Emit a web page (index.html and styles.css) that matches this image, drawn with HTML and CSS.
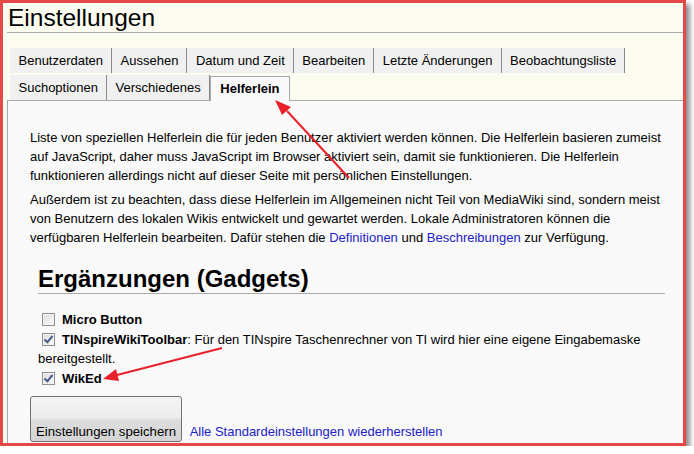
FILE: index.html
```html
<!DOCTYPE html>
<html lang="de">
<head>
    <meta charset="UTF-8">
    <title>Einstellungen</title>
    <link rel="stylesheet" href="styles.css">
</head>
<body>
    <div class="frame">
        <h1 class="title">Einstellungen</h1>

        <ul class="tabs">
            <li>Benutzerdaten</li>
            <li>Aussehen</li>
            <li>Datum und Zeit</li>
            <li>Bearbeiten</li>
            <li>Letzte Änderungen</li>
            <li>Beobachtungsliste</li>
            <li>Suchoptionen</li>
            <li>Verschiedenes</li>
            <li class="active">Helferlein</li>
        </ul>

        <div class="panel">
            <p>Liste von speziellen Helferlein die für jeden Benutzer aktiviert werden können. Die Helferlein basieren zumeist auf JavaScript, daher muss JavaScript im Browser aktiviert sein, damit sie funktionieren. Die Helferlein funktionieren allerdings nicht auf dieser Seite mit persönlichen Einstellungen.</p>
            <p>Außerdem ist zu beachten, dass diese Helferlein im Allgemeinen nicht Teil von MediaWiki sind, sondern meist von Benutzern des lokalen Wikis entwickelt und gewartet werden. Lokale Administratoren können die verfügbaren Helferlein bearbeiten. Dafür stehen die <a href="#">Definitionen</a> und <a href="#">Beschreibungen</a> zur Verfügung.</p>

            <h2>Ergänzungen (Gadgets)</h2>
            <ul class="gadgets">
                <li><input type="checkbox"><b>Micro Button</b></li>
                <li><input type="checkbox" checked><b>TINspireWikiToolbar</b>: Für den TINspire Taschenrechner von TI wird hier eine eigene Eingabemaske bereitgestellt.</li>
                <li><input type="checkbox" checked><b>WikEd</b></li>
            </ul>

            <div class="actions">
                <button>Einstellungen speichern</button>
                <a href="#">Alle Standardeinstellungen wiederherstellen</a>
            </div>
        </div>

        <!-- Markierungen aus dem Screenshot -->
        <svg class="arrows" width="680" height="440" viewBox="0 0 680 440">
            <line x1="346" y1="175" x2="284" y2="108" />
            <polygon points="272,97 288,104 279,112" />
            <line x1="219" y1="345" x2="114" y2="372" />
            <polygon points="100,376 113,366 116,378" />
        </svg>
    </div>
</body>
</html>
```

FILE: styles.css
```css
body {
    margin: 0;
    background: #fff;
    font-family: "Liberation Sans", Arial, sans-serif;
    font-size: 13px;
    color: #000;
}
.frame {
    position: relative;
    width: 680px;
    height: 440px;
    border: 3px solid #e44848;
    background: #fcfbf0;
    overflow: hidden;
    box-shadow: 4px 4px 5px rgba(0, 0, 0, 0.45);
}
.title {
    margin: 0 0 0 4px;
    padding: 1px 0 0 1px;
    font-size: 24.5px;
    font-weight: normal;
    line-height: 28px;
    border-bottom: 1px solid #aaa;
}
.tabs {
    list-style: none;
    margin: 15px 0 0 7px;
    padding: 0;
    display: flex;
    flex-wrap: wrap;
    row-gap: 2px;
}
.tabs li {
    height: 25px;
    line-height: 25px;
    padding: 0 8px 0 8.5px;
    background: #f0f0f0;
    border-right: 1px solid #888;
}
.tabs li.active {
    position: relative;
    align-self: flex-end;
    height: 24px;
    line-height: 24px;
    margin-bottom: -1px;
    padding: 0 9.5px;
    background: #f9f9f9;
    border: 1px solid #aaa;
    border-bottom: none;
    font-weight: bold;
}
.panel {
    margin-left: 4px;
    height: 400px;
    padding: 27px 22px 0 22px;
    background: #f9f9f9;
    border: 1px solid #aaa;
    border-right: none;
    line-height: 19px;
}
.panel p {
    margin: 0 0 5px;
}
a {
    color: #2222c4;
    text-decoration: none;
}
.panel h2 {
    margin: 18px -4px 0 8px;
    font-size: 24px;
    line-height: 28px;
    border-bottom: 1px solid #aaa;
}
.gadgets {
    list-style: none;
    margin: 16px 0 0 8px;
    padding: 0;
}
.gadgets li {
    margin-bottom: 1px;
}
.gadgets input {
    appearance: none;
    position: relative;
    width: 13px;
    height: 13px;
    margin: 0 7px 0 4px;
    vertical-align: -2px;
    border: 1px solid #8e8f8f;
    background: linear-gradient(135deg, #dcdcdc, #fbfbfb);
    box-shadow: inset 0 0 0 1px #f4f4f4;
}
.gadgets input:checked::after {
    content: "";
    position: absolute;
    left: 3px;
    top: 0px;
    width: 3px;
    height: 7px;
    border: solid #4a5b8c;
    border-width: 0 2px 2px 0;
    transform: rotate(40deg);
}
.actions {
    margin-top: 8px;
}
.actions button {
    width: 152px;
    height: 46px;
    padding: 25px 4px 0;
    font-family: inherit;
    font-size: 13.2px;
    color: #000;
    text-align: center;
    border: 1px solid #707070;
    border-radius: 3px;
    background: linear-gradient(#f4f4f4 0%, #ececec 48%, #dedede 52%, #d4d4d4 100%);
}
.actions a {
    margin-left: 4px;
}
.arrows {
    position: absolute;
    left: 0;
    top: 0;
    pointer-events: none;
}
.arrows line {
    stroke: #e8202a;
    stroke-width: 2;
}
.arrows polygon {
    fill: #e8202a;
}
```
